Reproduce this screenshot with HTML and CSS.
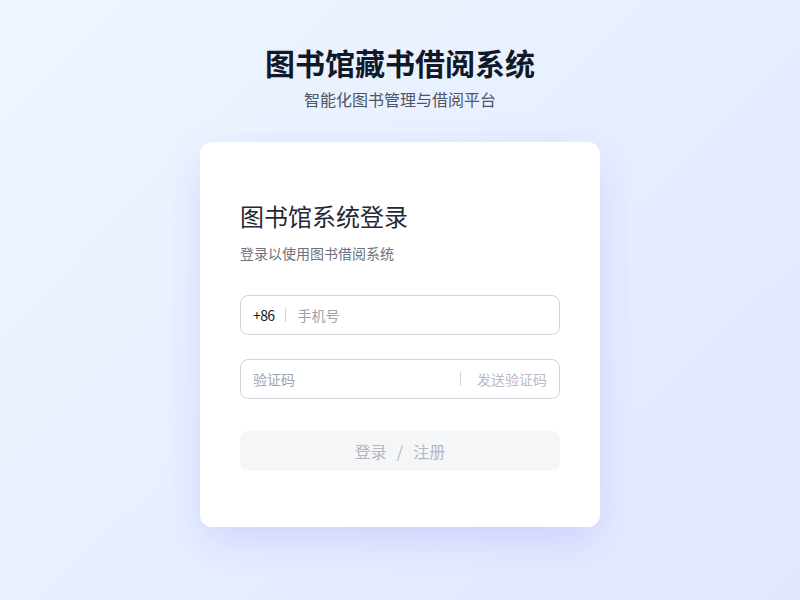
FILE: index.html
```html
<!DOCTYPE html>
<html lang="zh-CN">
<head>
<meta charset="utf-8">
<title>图书馆藏书借阅系统</title>
<link rel="stylesheet" href="styles.css">
</head>
<body>
<div class="page">
  <header class="header">
    <h1 class="app-title">图书馆藏书借阅系统</h1>
    <p class="app-subtitle">智能化图书管理与借阅平台</p>
  </header>
  <main class="card">
    <h2 class="card-title">图书馆系统登录</h2>
    <p class="card-subtitle">登录以使用图书借阅系统</p>
    <div class="field field-phone">
      <span class="prefix">+86</span>
      <span class="sep"></span>
      <span class="placeholder">手机号</span>
    </div>
    <div class="field field-code">
      <span class="placeholder grow">验证码</span>
      <span class="sep"></span>
      <span class="send">发送验证码</span>
    </div>
    <div class="submit"><span>登录</span><span class="slash">/</span><span>注册</span></div>
  </main>
</div>
</body>
</html>
```

FILE: styles.css
```css
* { box-sizing: border-box; }
html, body { margin: 0; padding: 0; height: 100%; }
body {
  font-family: "Noto Sans CJK SC", "Noto Sans", sans-serif;
  background: linear-gradient(135deg, #eff6ff 0%, #e0e7ff 100%);
  color: #111827;
}
.page {
  display: flex;
  flex-direction: column;
  align-items: center;
  padding-top: 44px;
}
.header { text-align: center; }
.app-title {
  margin: 0;
  font-size: 30px;
  line-height: 36px;
  font-weight: 700;
  color: #111827;
}
.app-subtitle {
  margin: 7px 0 0;
  font-size: 16px;
  line-height: 24px;
  color: #4b5563;
}
.card {
  margin-top: 31px;
  width: 400px;
  background: #fff;
  border-radius: 12px;
  padding: 56px 40px 56px;
  box-shadow: 0 20px 40px -8px rgba(99, 102, 241, 0.12), 0 8px 40px rgba(99, 102, 241, 0.08);
}
.card-title {
  margin: 0;
  font-size: 24px;
  line-height: 36px;
  font-weight: 400;
  color: #1f2937;
}
.card-subtitle {
  margin: 9px 0 0;
  font-size: 14px;
  line-height: 20px;
  color: #6b7280;
}
.field {
  height: 40px;
  border: 1px solid #d1d5db;
  border-radius: 8px;
  display: flex;
  align-items: center;
  padding: 0 12px;
  font-size: 14px;
}
.field-phone { margin-top: 32px; }
.field-code { margin-top: 24px; }
.prefix {
  color: #111827;
  font-size: 14px;
  letter-spacing: -0.6px;
}
.sep {
  width: 1px;
  height: 14px;
  background: #d1d5db;
  margin: 0 12px 0 10px;
}
.field-code .sep { margin: 0 16px 0 0; }
.placeholder { color: #9ca3af; }
.grow { flex: 1; }
.send { color: #b8bcc4; }
.submit {
  margin-top: 32px;
  height: 40px;
  border-radius: 8px;
  background: #f5f6f8;
  color: #b3b6bc;
  font-size: 16px;
  display: flex;
  align-items: center;
  justify-content: center;
}
.slash { margin: 0 10px; }
```
